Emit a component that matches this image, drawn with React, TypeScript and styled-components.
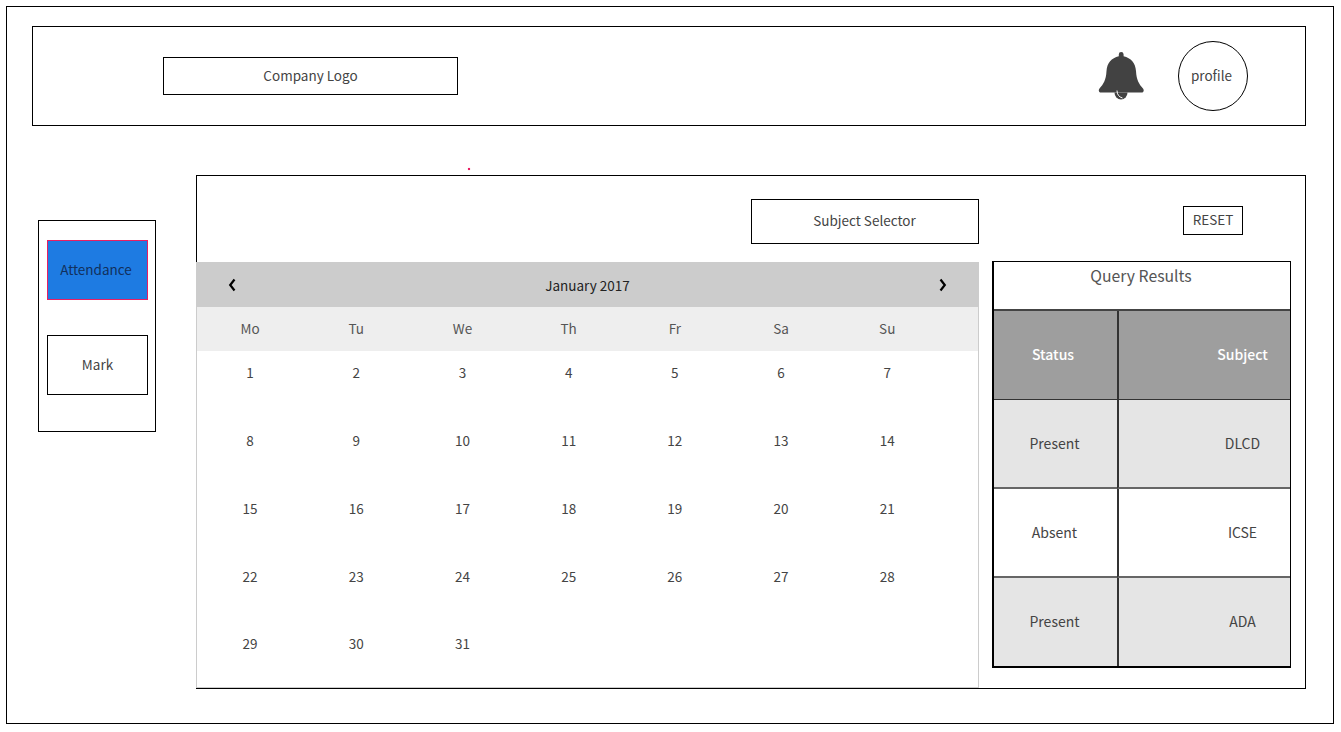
import React from 'react';
import styled, { createGlobalStyle } from 'styled-components';

const GlobalStyle = createGlobalStyle`
  html, body {
    margin: 0;
    padding: 0;
    background: #fff;
  }
  body {
    font-family: "Noto Sans CJK JP", "Noto Sans", sans-serif;
    font-size: 13.5px;
    color: #444;
  }
  * {
    box-sizing: border-box;
  }
`;

const Frame = styled.div`
  position: relative;
  margin: 6px 0 0 6px;
  width: 1328px;
  height: 718px;
  padding: 19px 27px 0 25px;
  border: 1px solid #000;
`;

const Header = styled.header`
  display: flex;
  align-items: center;
  height: 100px;
  padding: 0 57px 0 130px;
  border: 1px solid #000;
`;

const Logo = styled.div`
  display: flex;
  align-items: center;
  justify-content: center;
  width: 295px;
  height: 38px;
  padding-bottom: 2px;
  border: 1px solid #000;
`;

const Bell = styled.svg`
  width: 46px;
  height: 50px;
  margin-left: auto;
  margin-right: 34px;
  fill: #424242;
`;

const Profile = styled.div`
  display: flex;
  align-items: center;
  justify-content: center;
  width: 70px;
  height: 70px;
  padding: 0 3px 2px 0;
  border: 1px solid #000;
  border-radius: 50%;
`;

const Speck = styled.span`
  position: absolute;
  left: 461px;
  top: 161px;
  width: 2px;
  height: 2px;
  background: #e91e63;
  box-shadow: 0 0 1px rgba(233, 30, 99, 0.6);
`;

const Body = styled.div`
  display: flex;
  align-items: flex-start;
  margin-top: 49px;
`;

const Sidebar = styled.nav`
  display: flex;
  flex-direction: column;
  gap: 35px;
  width: 118px;
  height: 212px;
  margin: 45px 40px 0 6px;
  padding: 19px 7px 0 8px;
  border: 1px solid #000;
`;

const NavItem = styled.div<{ $active?: boolean }>`
  display: flex;
  align-items: center;
  justify-content: center;
  height: 60px;
  padding: 0 ${({ $active }) => ($active ? '3px' : '0')} 2px 0;
  border: 1px solid ${({ $active }) => ($active ? '#e91e63' : '#000')};
  background: ${({ $active }) => ($active ? '#1e7be2' : '#fff')};
  color: ${({ $active }) => ($active ? '#12305c' : '#444')};
`;

const Main = styled.main`
  width: 1110px;
  height: 514px;
  border: 1px solid #000;
`;

const Toolbar = styled.div`
  display: flex;
  align-items: flex-start;
  height: 86px;
`;

const SubjectSelector = styled.div`
  display: flex;
  align-items: center;
  justify-content: center;
  width: 228px;
  height: 45px;
  margin: 23px 0 0 554px;
  padding: 0 1px 4px 0;
  border: 1px solid #000;
`;

const ResetButton = styled.button`
  width: 60px;
  height: 29px;
  margin: 30px 0 0 204px;
  padding: 0 0 4px;
  border: 1px solid #000;
  background: #fff;
  color: #444;
  font: inherit;
`;

const Content = styled.div`
  display: flex;
  align-items: flex-start;
`;

const Calendar = styled.section`
  width: 783px;
  height: 426px;
  margin-left: -1px;
  border-left: 1px solid #ccc;
  border-right: 1px solid #ccc;
  border-bottom: 1px solid #ccc;
  overflow: hidden;
`;

const MonthBar = styled.div`
  display: flex;
  align-items: center;
  justify-content: space-between;
  height: 45px;
  margin-left: -1px;
  padding: 0 30px 0 31px;
  background: #ccc;
  color: #222;
`;

const Chevron = styled.svg`
  width: 10px;
  height: 14px;
  fill: none;
  stroke: #000;
  stroke-width: 2.2;
`;

const WeekRow = styled.div`
  display: grid;
  grid-template-columns: repeat(7, 106.2px);
  align-items: center;
  height: 44px;
  margin-left: -1px;
  padding: 0 0 2px 1px;
  background: #eee;
  color: #555;
`;

const DayGrid = styled.div`
  display: grid;
  grid-template-columns: repeat(7, 106.2px);
  grid-auto-rows: 67.8px;
`;

const Cell = styled.div`
  padding-top: 11.2px;
  line-height: 20px;
  text-align: center;
`;

const WeekCell = styled.div`
  text-align: center;
`;

const Results = styled.table`
  width: 299px;
  height: 407px;
  margin: -1px 0 0 13px;
  border-collapse: separate;
  border-spacing: 0;
  border-style: solid;
  border-color: #000;
  border-width: 1px 1px 2px 2px;
  table-layout: fixed;
  font-size: 14px;
`;

const Caption = styled.th`
  height: 49px;
  padding: 0 2px 21px 0;
  border-bottom: 2px solid #444;
  font-size: 15.75px;
  font-weight: 400;
  color: #555;
`;

const HeadCell = styled.th<{ $right?: boolean }>`
  height: 89px;
  padding: 0 ${({ $right }) => ($right ? '0' : '5px')} 2px ${({ $right }) => ($right ? '76px' : '0')};
  background: #9e9e9e;
  border-left: ${({ $right }) => ($right ? '2px solid #333' : 'none')};
  border-bottom: 1px solid #333;
  color: #fff;
  font-weight: 500;
  text-align: center;
`;

const DataCell = styled.td<{ $right?: boolean; $shaded?: boolean }>`
  height: 89px;
  padding: 0 ${({ $right }) => ($right ? '0' : '2px')} 2px ${({ $right }) => ($right ? '76px' : '0')};
  background: ${({ $shaded }) => ($shaded ? '#e5e5e5' : '#fff')};
  border-left: ${({ $right }) => ($right ? '2px solid #333' : 'none')};
  border-bottom: 2px solid #666;
  text-align: center;

  tr:last-child > & {
    height: 88px;
    border-bottom: none;
  }
`;

const weekdays = ['Mo', 'Tu', 'We', 'Th', 'Fr', 'Sa', 'Su'];
const days = Array.from({ length: 31 }, (_, i) => i + 1);
const rows = [
  { status: 'Present', subject: 'DLCD' },
  { status: 'Absent', subject: 'ICSE' },
  { status: 'Present', subject: 'ADA' },
];

const App: React.FC = () => {
  return (
    <>
      <GlobalStyle />
      <Frame>
        <Header>
          <Logo>Company Logo</Logo>
          <Bell viewBox="0 0 46 50" aria-hidden="true">
            <path d="M20.8 3.500a2.400 2.400 0 0 1 4.800 0v1.700C33 7 37.500 12 38 20c.5 9 3 13 7 17.500 1.500 2 .5 4-1.500 4H3c-2 0-3-2-1.500-4C5.500 33 8 29 8.500 20c.5-8 5-13 12.300-14.800z" />
            <path d="M16.500 41.500h13a6.500 7 0 0 1-13 0z" />
            <path d="M19 39.500c0 4 2 6.500 5.500 7.500" fill="none" stroke="#fff" strokeWidth="1" />
          </Bell>
          <Profile>profile</Profile>
        </Header>
        <Speck />
        <Body>
          <Sidebar>
            <NavItem $active>Attendance</NavItem>
            <NavItem>Mark</NavItem>
          </Sidebar>
          <Main>
            <Toolbar>
              <SubjectSelector>Subject Selector</SubjectSelector>
              <ResetButton>RESET</ResetButton>
            </Toolbar>
            <Content>
              <Calendar>
                <MonthBar>
                  <Chevron viewBox="0 0 10 14">
                    <path d="M7.500 1.500 3.200 7l4.300 5.500" />
                  </Chevron>
                  <span>January 2017</span>
                  <Chevron viewBox="0 0 10 14">
                    <path d="M2.500 1.500 6.800 7l-4.300 5.500" />
                  </Chevron>
                </MonthBar>
                <WeekRow>
                  {weekdays.map((d) => (
                    <WeekCell key={d}>{d}</WeekCell>
                  ))}
                </WeekRow>
                <DayGrid>
                  {days.map((d) => (
                    <Cell key={d}>{d}</Cell>
                  ))}
                </DayGrid>
              </Calendar>
              <Results>
                <colgroup>
                  <col style={{ width: 123 }} />
                  <col />
                </colgroup>
                <thead>
                  <tr>
                    <Caption colSpan={2}>Query Results</Caption>
                  </tr>
                  <tr>
                    <HeadCell>Status</HeadCell>
                    <HeadCell $right>Subject</HeadCell>
                  </tr>
                </thead>
                <tbody>
                  {rows.map((r, i) => (
                    <tr key={r.subject}>
                      <DataCell $shaded={i % 2 === 0}>{r.status}</DataCell>
                      <DataCell $right $shaded={i % 2 === 0}>
                        {r.subject}
                      </DataCell>
                    </tr>
                  ))}
                </tbody>
              </Results>
            </Content>
          </Main>
        </Body>
      </Frame>
    </>
  );
};

export default App;
